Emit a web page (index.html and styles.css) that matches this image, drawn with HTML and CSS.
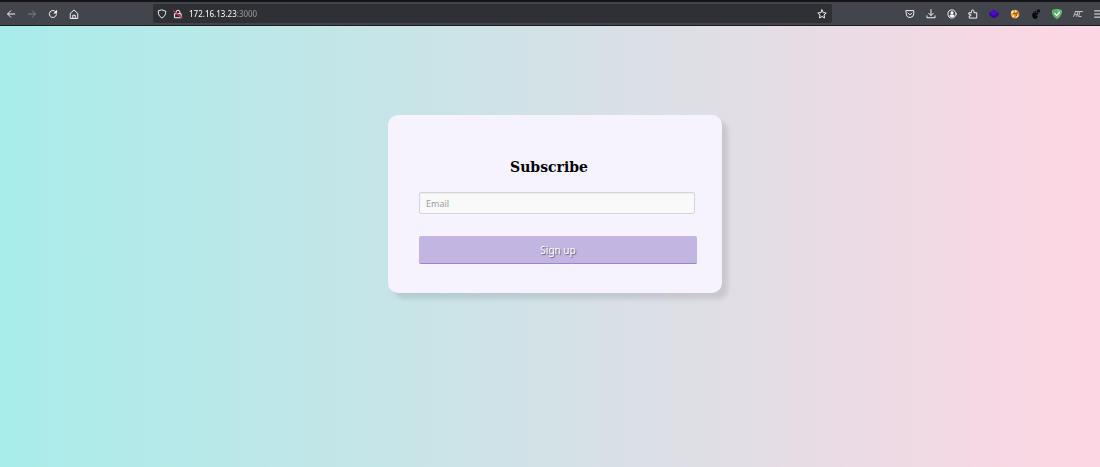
FILE: index.html
```html
<!DOCTYPE html>
<html lang="en">
<head>
    <meta charset="UTF-8">
    <meta name="viewport" content="width=device-width, initial-scale=1.0">
    <title>Subscribe</title>
    <link rel="stylesheet" href="styles.css">
</head>
<body>
    <header class="toolbar">
        <nav class="nav-buttons">
            <button class="icon-button" aria-label="Back"><svg viewBox="0 0 16 16"><path d="M14 8H3M7.500 3 2.500 8l5 5"/></svg></button>
            <button class="icon-button" aria-label="Forward" disabled><svg viewBox="0 0 16 16"><path d="M2 8h11M8.500 3l5 5-5 5"/></svg></button>
            <button class="icon-button" aria-label="Reload"><svg viewBox="0 0 16 16"><path d="M13.500 9A5.700 5.700 0 1 1 12 4"/><path class="solid" d="M14.500 1v6h-6z"/></svg></button>
            <button class="icon-button" aria-label="Home"><svg viewBox="0 0 16 16"><path d="M2 14.500V7l6-5.500L14 7v7.500z"/><path d="M6 14v-4h4v4"/></svg></button>
        </nav>
        <div class="urlbar">
            <svg viewBox="0 0 16 16"><path d="M8 1.500 14 3.500c0 5-1.500 8.500-6 11-4.500-2.500-6-6-6-11z"/></svg>
            <svg viewBox="0 0 16 16"><path d="M3 7.500h10V14H3zM5 7.500V5a3 3 0 0 1 6 0v2.500"/><path class="slash" d="M1 3l13 11"/></svg>
            <input class="address" type="text" aria-label="Address" value="172.16.13.23:3000">
            <button class="icon-button" aria-label="Bookmark"><svg viewBox="0 0 16 16"><path d="M8 1.500l2 4.300 4.700.6-3.500 3.200.9 4.700L8 12l-4.100 2.300.9-4.700L1.300 6.400 6 5.800z"/></svg></button>
        </div>
        <div class="extensions">
            <button class="icon-button" aria-label="Pocket"><svg viewBox="0 0 16 16"><path d="M2 2.500h12v5a6 6 0 0 1-12 0zM5 6.500l3 3 3-3"/></svg></button>
            <button class="icon-button" aria-label="Downloads"><svg viewBox="0 0 16 16"><path d="M8 1v9M4.500 7 8 10.500 11.500 7M1.500 11v3h13v-3"/></svg></button>
            <button class="icon-button" aria-label="Account"><svg viewBox="0 0 16 16"><circle cx="8" cy="8" r="6.500"/><circle class="solid" cx="8" cy="6" r="2.500"/><path class="solid" d="M4 11c0-3 8-3 8 0-2 2.500-6 2.500-8 0z"/></svg></button>
            <button class="icon-button" aria-label="Extensions"><svg viewBox="0 0 16 16"><path d="M2 6h3.500V3.500a2 2 0 0 1 4 0V6H14v8.500H2V11h2a1.500 1.500 0 0 0 0-2.500H2z"/></svg></button>
            <button class="icon-button" aria-label="Wappalyzer"><svg viewBox="0 0 16 16"><path fill="#3a0499" stroke="none" d="M8 1l7.500 5v4L8 15 .5 10V6z"/><path fill="#4d0bc2" stroke="none" d="M8 1l7.500 5L8 11 .5 6z"/></svg></button>
            <button class="icon-button" aria-label="FoxyProxy"><svg viewBox="0 0 16 16"><circle cx="8" cy="8" r="7" fill="#ed9525" stroke="none"/><path fill="#f8e9ce" stroke="none" d="M2 4l2-2 2 1-1 3-3 2zM8 2l3 1-1 2-2 1zM3 11l3-2 1 2-2 3zM12 9l2 2-3 3-2-1z"/><path stroke="#754b26" d="M6 7h4l3-2M10 8v3"/></svg></button>
            <button class="icon-button" aria-label="Footprint"><svg viewBox="0 0 16 16"><g fill="#08090b" stroke="none"><path d="M2 8c2-3 9-3 10-1 0 2-4 1-4 3 1 1 2 0 3 1 0 3-3 5-5 5-3-1-5-5-4-8z"/><ellipse cx="12" cy="3" rx="2.500" ry="2.500"/><circle cx="7.500" cy="4" r="1.300"/><circle cx="4.500" cy="5" r="1"/></g></svg></button>
            <button class="icon-button" aria-label="AdGuard"><svg viewBox="0 0 16 16"><path fill="#68bc71" stroke="none" d="M8 0c3 0 6 1 8 2 0 6-2 11-8 14-6-3-8-8-8-14 2-1 5-2 8-2z"/><path fill="#5bae68" stroke="none" d="M8 0v16C2 13 0 8 0 2c2-1 5-2 8-2z"/><path stroke="#fff" stroke-width="2" d="M4.500 7l3 3.500L12 5"/></svg></button>
            <button class="icon-button" aria-label="Editor"><svg viewBox="0 0 16 16"><path stroke="#c3c4c8" d="M1 12 4 4h4l-2 8M3 9h4M15 4h-4L9 12h4M4 4h11"/></svg></button>
            <button class="icon-button" aria-label="Menu"><svg viewBox="0 0 16 16"><path d="M1 3h14M1 8h14M1 13h14"/></svg></button>
        </div>
    </header>

    <main class="page">
        <form class="card">
            <h2>Subscribe</h2>
            <input class="email" type="email" placeholder="Email" aria-label="Email">
            <button class="signup" type="submit">Sign up</button>
        </form>
    </main>
</body>
</html>
```
FILE: styles.css
```css
* {
    box-sizing: border-box;
}
body {
    display: flex;
    flex-direction: column;
    min-height: 100vh;
    margin: 0;
    overflow-x: hidden;
    font-family: "Noto Sans", sans-serif;
}
button {
    border: none;
    cursor: pointer;
}

/* browser toolbar */
.toolbar {
    display: flex;
    align-items: center;
    height: 26px;
    border-top: 2px solid #15141a;
    border-bottom: 1px solid #1c1b20;
    background-color: #42454c;
    overflow: hidden;
}
.nav-buttons,
.extensions {
    display: flex;
    flex-shrink: 0;
}
.extensions {
    margin-right: -9px;
}
.icon-button {
    display: flex;
    align-items: center;
    justify-content: center;
    width: 21px;
    height: 18px;
    padding: 0;
    background: none;
    color: #fbfbfe;
}
.icon-button:disabled {
    color: #85868b;
}
.toolbar svg {
    flex-shrink: 0;
    width: 10px;
    height: 10px;
    fill: none;
    stroke: currentColor;
    stroke-width: 1.5;
    stroke-linecap: round;
    stroke-linejoin: round;
}
.toolbar .solid {
    fill: currentColor;
    stroke: none;
}
.toolbar .slash {
    stroke: #e22850;
    stroke-width: 2;
}
.urlbar {
    display: flex;
    flex: 1;
    align-items: center;
    gap: 6px;
    height: 19px;
    margin: 0 67px 0 69px;
    padding-left: 4px;
    border-radius: 2px;
    background-color: #2f3035;
    color: #fbfbfe;
}
/* host is bright, port is dimmed */
.address {
    flex: 1;
    min-width: 0;
    padding: 0;
    border: none;
    outline: none;
    background: linear-gradient(to right, #fbfbfe 48px, #96979b 48px);
    background-clip: text;
    -webkit-background-clip: text;
    color: transparent;
    font: 500 8px "Noto Sans", sans-serif;
}

/* page */
.page {
    flex: 1;
    padding: 89px 0 20px 10px;
    background: linear-gradient(to right, #a8edea, #fed6e3);
}
.card {
    display: flex;
    flex-direction: column;
    max-width: 334px;
    margin: 0 auto;
    padding: 42px 25px 29px 31px;
    border-radius: 10px;
    background-color: #f6f3ff;
    box-shadow: 6px 6px 4px rgba(0, 0, 0, 0.1);
}
.card h2 {
    margin: 0 18px 15px 0;
    font: bold 14px/20px "DejaVu Serif", serif;
    text-align: center;
}
.email {
    height: 22px;
    margin: 0 2px 22px 0;
    padding: 0 6px;
    border: 1px solid #d6d3dd;
    border-radius: 2px;
    background-color: #f9f9f9;
    box-shadow: inset 0 1px 1px rgba(0, 0, 0, 0.05);
    font: 9px "Noto Sans", sans-serif;
}
.email::placeholder {
    color: #9d9d9f;
}
.signup {
    height: 28px;
    border-bottom: 1px solid #9b85cf;
    border-radius: 2px;
    background-color: #c2b5e2;
    color: #fff;
    font: 10px "Noto Sans", sans-serif;
    text-shadow: 1px 1px 1px rgba(0, 0, 0, 0.5);
}
```
